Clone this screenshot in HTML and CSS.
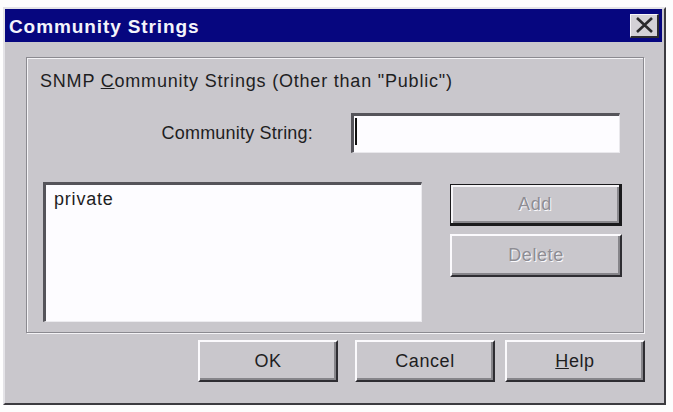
FILE: index.html
```html
<!DOCTYPE html>
<html>
<head>
<meta charset="utf-8">
<title>Community Strings</title>
<link rel="stylesheet" href="styles.css">
</head>
<body>
<div class="window">
  <div class="titlebar">
    <span class="title">Community Strings</span>
    <button class="close" aria-label="Close">
      <svg width="19" height="16" viewBox="0 0 19 16"><path d="M2 1 L17 15 M17 1 L2 15" stroke="#2a2a2c" stroke-width="2.6" fill="none"/></svg>
    </button>
  </div>
  <div class="body">
    <div class="group">
      <div class="group-label">SNMP <u>C</u>ommunity Strings (Other than "Public")</div>
      <div class="field-row">
        <label class="field-label">Community String:</label>
        <div class="input"><span class="caret"></span></div>
      </div>
      <div class="list-row">
        <div class="listbox"><div class="item">private</div></div>
        <div class="side-buttons">
          <button class="btn default disabled">Add</button>
          <button class="btn disabled delete">Delete</button>
        </div>
      </div>
    </div>
    <div class="footer">
      <button class="btn ok">OK</button>
      <button class="btn cancel">Cancel</button>
      <button class="btn help"><u>H</u>elp</button>
    </div>
  </div>
</div>
</body>
</html>
```

FILE: styles.css
```css
html, body {
  margin: 0;
  padding: 0;
  background: #fdfdfd;
}
body {
  font-family: "Liberation Sans", Arial, sans-serif;
  font-size: 18px;
  color: #1e1e1f;
}
.window {
  margin: 7px 0 0 3px;
  width: 663px;
  box-sizing: border-box;
  background: #c9c7cc;
  border-style: solid;
  border-width: 2px;
  border-color: #e4e3e7 #3c3b40 #3c3b40 #e4e3e7;
}
.titlebar {
  height: 33px;
  margin-right: 2px;
  background: #06067f;
  display: flex;
  align-items: center;
  justify-content: space-between;
  padding: 0 3px 0 4px;
}
.title {
  color: #f4f4fb;
  font-weight: bold;
  font-size: 19px;
  letter-spacing: 0.9px;
  padding-top: 2px;
}
.close {
  width: 29px;
  height: 24px;
  padding: 0;
  display: flex;
  align-items: center;
  justify-content: center;
  background: #d3d1d6;
  border-style: solid;
  border-width: 1px 2px 2px 1px;
  border-color: #f6f5f8 #2c2b30 #2c2b30 #f6f5f8;
}
.body {
  padding: 15px 0 21px 21px;
}
.group {
  width: 618px;
  box-sizing: border-box;
  border: 1px solid #8b8a90;
  box-shadow: inset 1px 1px 0 #f4f3f6, 1px 1px 0 #f4f3f6;
  padding: 12px 21px 10px 13px;
}
.group-label {
  line-height: 22px;
  letter-spacing: 0.8px;
}
.field-row {
  margin-top: 21px;
  display: flex;
  justify-content: flex-end;
  align-items: center;
  gap: 38px;
}
.field-label {
  letter-spacing: 0.2px;
}
.input {
  width: 269px;
  height: 40px;
  margin-right: 2px;
  box-sizing: border-box;
  background: #fdfcff;
  border-style: solid;
  border-width: 3px 1px 1px 3px;
  border-color: #55545a #e9e8ec #e9e8ec #55545a;
  padding: 2px 0 0 1px;
}
.caret {
  display: block;
  width: 2px;
  height: 27px;
  background: #111;
}
.list-row {
  margin-top: 29px;
  display: flex;
  align-items: flex-start;
  justify-content: space-between;
}
.listbox {
  margin-left: 3px;
  width: 379px;
  height: 140px;
  box-sizing: border-box;
  background: #fdfcff;
  border-style: solid;
  border-width: 3px 1px 1px 3px;
  border-color: #55545a #ecebef #ecebef #55545a;
  padding: 3px 8px;
}
.item {
  line-height: 22px;
  letter-spacing: 0.8px;
}
.side-buttons {
  margin-top: 2px;
  width: 172px;
  display: flex;
  flex-direction: column;
  gap: 8px;
}
.btn {
  font-family: "Liberation Sans", Arial, sans-serif;
  font-size: 18px;
  letter-spacing: 0.6px;
  color: #1e1e1f;
  background: #c9c7cc;
  height: 42px;
  padding: 0;
  box-sizing: border-box;
  border-style: solid;
  border-width: 2px;
  border-color: #fbfafd #2e2d32 #2e2d32 #fbfafd;
  box-shadow: inset -2px -2px 0 #86858a;
}
.btn.default {
  border-width: 1px 3px 3px 1px;
  border-color: #1a1a1c;
  box-shadow: inset 2px 2px 0 #f6f5f8, inset -2px -2px 0 #8a898e;
}
.btn.delete {
  height: 43px;
}
.btn.disabled {
  color: #8e8d93;
  text-shadow: 1px 1px 0 #fbfafd;
}
.footer {
  margin-top: 7px;
  display: flex;
  padding-left: 172px;
}
.btn.ok { width: 140px; }
.btn.cancel { width: 140px; margin-left: 17px; }
.btn.help { width: 140px; margin-left: 10px; }
```
